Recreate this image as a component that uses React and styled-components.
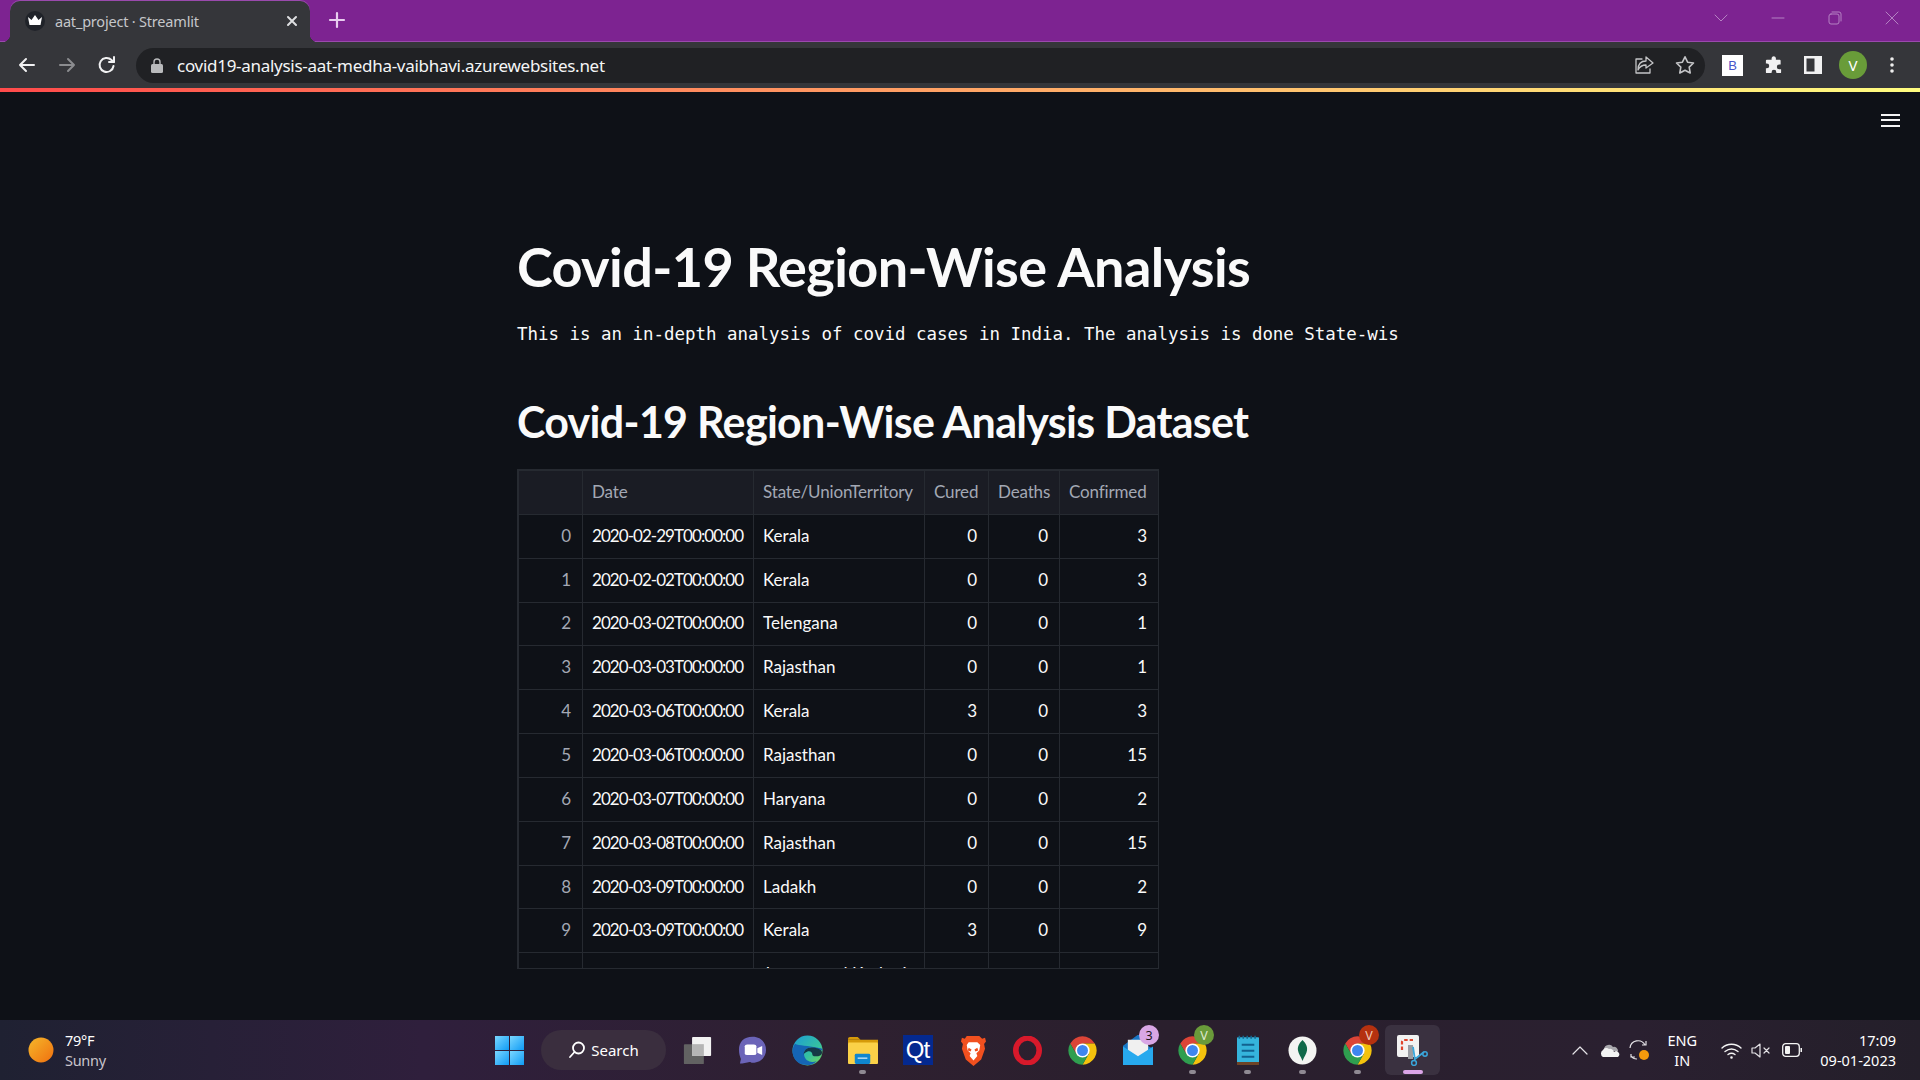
import React from "react";
import styled, { createGlobalStyle } from "styled-components";

const rows = [
  [0, "2020-02-29T00:00:00", "Kerala", 0, 0, 3],
  [1, "2020-02-02T00:00:00", "Kerala", 0, 0, 3],
  [2, "2020-03-02T00:00:00", "Telengana", 0, 0, 1],
  [3, "2020-03-03T00:00:00", "Rajasthan", 0, 0, 1],
  [4, "2020-03-06T00:00:00", "Kerala", 3, 0, 3],
  [5, "2020-03-06T00:00:00", "Rajasthan", 0, 0, 15],
  [6, "2020-03-07T00:00:00", "Haryana", 0, 0, 2],
  [7, "2020-03-08T00:00:00", "Rajasthan", 0, 0, 15],
  [8, "2020-03-09T00:00:00", "Ladakh", 0, 0, 2],
  [9, "2020-03-09T00:00:00", "Kerala", 3, 0, 9],
  ["", "", "Jammu and Kashmir", "", "", ""],
];

const GlobalStyle = createGlobalStyle`
  html, body { margin: 0; padding: 0; background: #0e1117; }
  * { box-sizing: border-box; }
`;

const Screen = styled.div`
  width: 1920px;
  height: 1080px;
  display: flex;
  flex-direction: column;
  overflow: hidden;
  font-family: "Noto Sans", sans-serif;
`;

const TabStrip = styled.div`
  height: 42px;
  flex: none;
  display: flex;
  align-items: flex-end;
  padding-left: 10px;
  background: #7d2391;
  border-bottom: 1px solid #9a4aad;
`;

const Tab = styled.div`
  position: relative;
  width: 300px;
  height: 41px;
  margin-bottom: -1px;
  display: flex;
  align-items: center;
  padding: 0 11px 2px 15px;
  background: #35363a;
  border-radius: 10px 10px 0 0;
  box-shadow: 0 -1px 0 #9a4aad;
  color: #c5c7ca;
  font-size: 14.5px;

  &::before, &::after {
    content: "";
    position: absolute;
    bottom: 0;
    width: 8px;
    height: 8px;
  }
  &::before {
    left: -8px;
    background: radial-gradient(circle at 0 0, transparent 8px, #35363a 8.5px);
  }
  &::after {
    right: -8px;
    background: radial-gradient(circle at 100% 0, transparent 8px, #35363a 8.5px);
  }
`;

const Favicon = styled.span`
  width: 20px;
  height: 20px;
  margin-right: 10px;
  flex: none;
  display: flex;
  align-items: center;
  justify-content: center;
  border-radius: 50%;
  background: #202329;
`;

const TabTitle = styled.span`
  flex: 1;
  letter-spacing: -0.2px;
`;

const NewTab = styled.span`
  display: flex;
  margin: 0 0 12px 18px;
`;

const WindowControls = styled.div`
  margin-left: auto;
  display: flex;
  align-items: center;
  align-self: flex-start;
  height: 36px;
`;

const WindowButton = styled.span`
  width: 57px;
  display: flex;
  justify-content: center;
`;

const Toolbar = styled.div`
  height: 46px;
  flex: none;
  display: flex;
  align-items: center;
  padding-left: 17px;
  background: #35363a;
  color: #fff;
`;

const NavButton = styled.span`
  width: ${(p) => p.$w || 40}px;
  display: flex;
  align-items: center;
`;

const Omnibox = styled.div`
  width: 1569px;
  height: 35px;
  margin-left: 7px;
  padding-left: 15px;
  display: flex;
  align-items: center;
  border-radius: 18px;
  background: #202124;
`;

const UrlText = styled.span`
  flex: 1;
  margin-left: 14px;
  font-size: 17px;
  letter-spacing: -0.28px;
  color: #f4f5f6;
`;

const BarIcon = styled.span`
  display: flex;
  justify-content: center;
  width: ${(p) => p.$w || 40}px;
  margin-left: ${(p) => p.$gap || 0}px;
`;

const ExtensionBox = styled.span`
  width: 21px;
  height: 21px;
  display: flex;
  align-items: center;
  justify-content: center;
  background: #fff;
  color: #4655c8;
  font: 13px "Liberation Sans", sans-serif;
`;

const Avatar = styled.span`
  width: 28px;
  height: 28px;
  display: flex;
  align-items: center;
  justify-content: center;
  border-radius: 50%;
  background: #699c39;
  color: #fff;
  font-size: 15px;
`;

const Decoration = styled.div`
  height: 4px;
  flex: none;
  background: linear-gradient(90deg, #ff4b4b, #fffd80);
`;

const Main = styled.main`
  flex: 1;
  min-height: 0;
  padding-left: 517px;
  background: #0e1117;
  color: #fafafa;
`;

const MenuRow = styled.div`
  height: 40px;
  display: flex;
  justify-content: flex-end;
  align-items: center;
  padding: 16px 20px 0 0;
  margin-bottom: 100px;
`;

const Hamburger = styled.span`
  width: 19px;
  height: 13px;
  border-top: 2px solid #f4f4f4;
  border-bottom: 2px solid #f4f4f4;
  position: relative;

  &::after {
    content: "";
    position: absolute;
    left: 0;
    right: 0;
    top: 3.5px;
    height: 2px;
    background: #f4f4f4;
  }
`;

const Title = styled.h1`
  margin: 0;
  font: 700 54px/70px Lato, sans-serif;
  letter-spacing: -0.6px;
`;

const Lead = styled.p`
  margin: 20px 0 0;
  font: 17.45px/24px "DejaVu Sans Mono", monospace;
  white-space: nowrap;
`;

const Subtitle = styled.h2`
  margin: 46px 0 0;
  font: 700 43px/60px Lato, sans-serif;
  letter-spacing: -0.7px;
`;

const TableFrame = styled.div`
  width: 642px;
  height: 500px;
  margin-top: 17px;
  overflow: hidden;
  border: 1px solid #262a31;
`;

const Table = styled.table`
  width: 640px;
  table-layout: fixed;
  border-collapse: collapse;
  font: 400 17px Lato, sans-serif;
`;

const HeadCell = styled.th`
  height: 43.85px;
  padding: 0 0 2px 9px;
  text-align: left;
  font-weight: 400;
  letter-spacing: -0.15px;
  color: #a3a8b4;
  background: #1a1c24;
  border: 1px solid #262a31;
  white-space: nowrap;
`;

const Cell = styled.td`
  height: 43.85px;
  padding: 0 ${(p) => (p.$right ? 11 : 0)}px 2px 9px;
  text-align: ${(p) => (p.$right ? "right" : "left")};
  color: ${(p) => (p.$muted ? "#a3a8b4" : "#fafafa")};
  letter-spacing: ${(p) => (p.$date ? "-0.95px" : "normal")};
  border: 1px solid #262a31;
  white-space: nowrap;
`;

const Taskbar = styled.footer`
  height: 60px;
  flex: none;
  display: flex;
  align-items: center;
  background: linear-gradient(90deg, #1f2132 0%, #2f1f3c 22%, #2e2030 45%, #2a1f2d 60%, #2a2030 85%, #241f2a 100%);
  color: #fff;
`;

const Weather = styled.div`
  width: 495px;
  padding-left: 28px;
  display: flex;
  align-items: center;
  gap: 11px;
  flex: none;
`;

const WeatherText = styled.div`
  font-size: 14.5px;
  line-height: 20px;
  letter-spacing: -0.3px;
`;

const Muted = styled.div`
  color: #c9c5cc;
`;

const StartButton = styled.span`
  width: 33px;
  display: flex;
  margin-right: 13px;
`;

const SearchPill = styled.div`
  width: 125px;
  height: 40px;
  margin-right: 4px;
  display: flex;
  align-items: center;
  justify-content: center;
  gap: 5px;
  border-radius: 20px;
  background: #3a2e3e;
  font-size: 15px;
`;

const Dock = styled.div`
  display: flex;
  align-items: center;
`;

const DockItem = styled.div`
  position: relative;
  width: 55px;
  height: 50px;
  display: flex;
  flex-direction: column;
  align-items: center;
  justify-content: center;
  border-radius: 6px;
  background: ${(p) => (p.$active ? "#3a3140" : "transparent")};
`;

const RunDot = styled.span`
  position: absolute;
  bottom: 1px;
  width: ${(p) => (p.$active ? 20 : 7)}px;
  height: 4px;
  border-radius: 2px;
  background: ${(p) => (p.$active ? "#dba5e8" : "#8f8a93")};
`;

const Badge = styled.span`
  position: absolute;
  top: 0;
  right: 6px;
  width: 20px;
  height: 20px;
  display: flex;
  align-items: center;
  justify-content: center;
  border-radius: 50%;
  font-size: 12.5px;
  background: ${(p) => p.$bg};
  color: ${(p) => p.$fg};
`;

const QtTile = styled.span`
  width: 30px;
  height: 30px;
  display: flex;
  align-items: center;
  justify-content: center;
  background: #04298f;
  color: #fff;
  font: 400 24px "Liberation Sans", sans-serif;
  letter-spacing: -1px;
`;

const Tray = styled.div`
  margin-left: auto;
  display: flex;
  align-items: center;
  padding-right: 24px;
  font-size: 14.5px;
`;

const TrayIcon = styled.span`
  width: ${(p) => p.$w || 30}px;
  display: flex;
  justify-content: center;
`;

const Lang = styled.div`
  width: 56px;
  margin: 0 6px 0 0;
  text-align: center;
  line-height: 20px;
`;

const Clock = styled.div`
  margin-left: 13px;
  text-align: right;
  line-height: 20px;
`;

const Stroke = ({ w = 20, h = 20, vb = "0 0 20 20", color = "#fff", sw = 2, children }) => (
  <svg width={w} height={h} viewBox={vb} fill="none" stroke={color} strokeWidth={sw} strokeLinecap="round" strokeLinejoin="round">
    {children}
  </svg>
);

const Chrome = () => (
  <svg width="31" height="31" viewBox="0 0 48 48">
    <path d="M43 13A22 22 0 0 0 5 13L14.5 29.5 24 13Z" fill="#db4437" />
    <path d="M43 13A22 22 0 0 1 24 46L33.5 29.5 24 13Z" fill="#f4c20d" />
    <path d="M24 46A22 22 0 0 1 5 13L14.5 29.5H33.5Z" fill="#2f9e4f" />
    <circle cx="24" cy="24" r="11" fill="#fff" />
    <circle cx="24" cy="24" r="8.5" fill="#3f86ee" />
  </svg>
);

const TaskView = () => (
  <svg width="31" height="29" viewBox="0 0 32 32">
    <rect x="1" y="9" width="22" height="22" rx="1" fill="#626262" />
    <rect x="10" y="1" width="21" height="21" rx="1" fill="#f2f2f2" />
    <rect x="10" y="9" width="13" height="13" fill="#b5b5b5" />
  </svg>
);

const Teams = () => (
  <svg width="29" height="29" viewBox="0 0 30 38" preserveAspectRatio="none">
    <path d="M15 1C6 1 1 8 1 18c0 5 1 9 2 12l-1 6c3 0 7-1 10-2 1 0 2 1 3 1 9 0 14-8 14-17S24 1 15 1Z" fill="#6b64b8" />
    <rect x="7" y="11" width="12" height="14" rx="2.5" fill="#fff" />
    <path d="M20 16l5-3v12l-5-3Z" fill="#fff" />
  </svg>
);

const Edge = () => (
  <svg width="31" height="31" viewBox="0 0 32 32">
    <defs>
      <linearGradient id="edgeTop" x1="0" y1="0" x2="1" y2="1">
        <stop offset="0" stopColor="#1c9bd6" />
        <stop offset="0.6" stopColor="#35c1a1" />
        <stop offset="1" stopColor="#7bd651" />
      </linearGradient>
    </defs>
    <circle cx="16" cy="16" r="15.5" fill="url(#edgeTop)" />
    <path d="M3 9C1 12 .5 15 .5 18c1 8 7 13 15 13 4 0 7-1 10-4-6 2-12 0-13-6-1-4 2-8 7-8 4 0 7 2 12 3 0-3-3-2-6-3C17 11 7 11 3 9Z" fill="#1565b5" />
    <path d="M12 21c0-5 3-8 8-8 5 0 11 2 11 5 0 3-3 4-7 4-2 0-3-1-3-2 0-2-2-4-5-3-2 1-4 2-4 4Z" fill="#0e1e38" opacity="0.85" />
  </svg>
);

const Folder = () => (
  <svg width="30" height="28" viewBox="0 0 31 30" preserveAspectRatio="none">
    <path d="M0 3a2 2 0 0 1 2-2h8l3 3h-13Z" fill="#d69a09" />
    <rect y="4" width="31" height="4" fill="#d69a09" />
    <rect y="7" width="31" height="23" rx="1" fill="#fbd148" />
    <rect x="7" y="19" width="16" height="11" rx="1.5" fill="#0f86cf" />
    <rect x="10" y="23" width="10" height="1.5" fill="#bfe2f6" />
  </svg>
);

const Brave = () => (
  <svg width="26" height="31" viewBox="0 0 27 34" preserveAspectRatio="none">
    <path d="M7 1h13l3 3 3-1 1 4-2 3 1 5-4 12-8 7-8-7L2 15l1-5-2-3 1-4 3 1Z" fill="#f1501f" />
    <path d="M9 8h9l3 3-1 6-3 3 1 3-4 5-4-5 1-3-3-3-1-6Z" fill="#fff" />
    <path d="M9 14l3 2-1 2-3-1ZM18 14l-3 2 1 2 3-1Z" fill="#f1501f" />
  </svg>
);

const Opera = () => (
  <svg width="29" height="29" viewBox="0 0 31 33" preserveAspectRatio="none">
    <ellipse cx="15.5" cy="16.5" rx="12.5" ry="14" fill="none" stroke="#d8192b" strokeWidth="6" />
  </svg>
);

const Mail = () => (
  <svg width="30" height="30" viewBox="0 0 31 31">
    <path d="M0 11 15 0h4v8L31 14v17H0Z" fill="#1976c5" />
    <path d="M5 5h21v14L15 25 5 19Z" fill="#f0f0f0" />
    <path d="M0 12 15.5 22 31 12v19H0Z" fill="#27a9ee" />
  </svg>
);

const Notepad = () => (
  <svg width="22" height="30" viewBox="0 0 28 40" preserveAspectRatio="none">
    <rect y="3" width="28" height="36" rx="1" fill="#35b4dc" />
    <rect y="36" width="28" height="4" fill="#6e4326" />
    <path d="M3 1v4M8 1v4M13 1v4M18 1v4M23 1v4" stroke="#15678e" strokeWidth="2" />
    <path d="M6 13h16M6 21h16M6 29h16" stroke="#12618f" strokeWidth="2.5" />
  </svg>
);

const Mongo = () => (
  <svg width="29" height="29" viewBox="0 0 29 29">
    <circle cx="14.5" cy="14.5" r="14" fill="#f3f4f2" />
    <path d="M14.5 4c-4 4-5 7-4.500 10.500.5 3.500 3 6 4.500 10.500 1.500-4.500 4-7 4.500-10.500C19.500 11 18.500 8 14.500 4Z" fill="#106949" />
  </svg>
);

const Snip = () => (
  <svg width="31" height="31" viewBox="0 0 31 31">
    <rect width="22" height="22" rx="2" fill="#f2f2f2" />
    <path d="M5 15V7a2 2 0 0 1 2-2h9" fill="none" stroke="#e0452d" strokeWidth="2.2" strokeDasharray="3.500 2" />
    <path d="M11 10h5v14h-5Z" fill="#9b9da3" />
    <path d="M16 12 18 25M27 17 18 24" stroke="#3aa7dc" strokeWidth="1.800" fill="none" />
    <circle cx="28" cy="19" r="2.200" fill="none" stroke="#3aa7dc" strokeWidth="1.500" />
    <circle cx="17" cy="28" r="2.400" fill="none" stroke="#3aa7dc" strokeWidth="1.500" />
  </svg>
);

const dock = [
  { key: "view", icon: <TaskView /> },
  { key: "teams", icon: <Teams /> },
  { key: "edge", icon: <Edge /> },
  { key: "files", icon: <Folder />, running: true },
  { key: "qt", icon: <QtTile>Qt</QtTile> },
  { key: "brave", icon: <Brave /> },
  { key: "opera", icon: <Opera /> },
  { key: "chrome", icon: <Chrome /> },
  { key: "mail", icon: <Mail />, badge: "3", bg: "#d9a6e5", fg: "#1d1820" },
  { key: "chrome-v", icon: <Chrome />, running: true, badge: "V", bg: "#6a9a3a", fg: "#dfe9cf" },
  { key: "notepad", icon: <Notepad />, running: true },
  { key: "mongo", icon: <Mongo />, running: true },
  { key: "chrome-r", icon: <Chrome />, running: true, badge: "V", bg: "#b5310f", fg: "#f0c8b8" },
  { key: "snip", icon: <Snip />, active: true },
];

export default function App() {
  return (
    <Screen>
      <GlobalStyle />
      <TabStrip>
        <Tab>
          <Favicon>
            <svg width="14" height="12" viewBox="0 0 14 12">
              <path d="M0 2l3.5 3L7 0l3.500 5L14 2l-1.500 8h-11Z" fill="#fff" />
            </svg>
          </Favicon>
          <TabTitle>aat_project · Streamlit</TabTitle>
          <Stroke w={14} h={14} vb="0 0 14 14" color="#dfe0e2" sw={2}>
            <path d="M3 3l8 8M11 3l-8 8" />
          </Stroke>
        </Tab>
        <NewTab>
          <Stroke w={18} h={18} vb="0 0 18 18" color="#e8cdef" sw={2.2}>
            <path d="M9 2v14M2 9h14" />
          </Stroke>
        </NewTab>
        <WindowControls>
          <WindowButton>
            <Stroke w={14} h={9} vb="0 0 14 9" color="#b582c3" sw={1}>
              <path d="M1 1l6 6 6-6" />
            </Stroke>
          </WindowButton>
          <WindowButton>
            <Stroke w={14} h={2} vb="0 0 14 2" color="#b582c3" sw={1}>
              <path d="M1 1h12" />
            </Stroke>
          </WindowButton>
          <WindowButton>
            <Stroke w={14} h={14} vb="0 0 14 14" color="#b582c3" sw={1}>
              <rect x="1" y="3" width="10" height="10" rx="2" />
              <path d="M4 1h7a2 2 0 0 1 2 2v7" />
            </Stroke>
          </WindowButton>
          <WindowButton>
            <Stroke w={14} h={14} vb="0 0 14 14" color="#b582c3" sw={1}>
              <path d="M1 1l12 12M13 1L1 13" />
            </Stroke>
          </WindowButton>
        </WindowControls>
      </TabStrip>

      <Toolbar>
        <NavButton>
          <Stroke vb="0 0 20 20" color="#f1f1f2">
            <path d="M17 10H3M9 4l-6 6 6 6" />
          </Stroke>
        </NavButton>
        <NavButton>
          <Stroke vb="0 0 20 20" color="#8b8c8f">
            <path d="M3 10h14M11 4l6 6-6 6" />
          </Stroke>
        </NavButton>
        <NavButton $w={32}>
          <Stroke vb="0 0 20 20" color="#f1f1f2">
            <path d="M16.500 11a7 7 0 1 1-2-6L17 7" />
            <path d="M17 2v5h-5" />
          </Stroke>
        </NavButton>
        <Omnibox>
          <svg width="12" height="15" viewBox="0 0 12 15">
            <path d="M3 6V4a3 3 0 0 1 6 0v2" fill="none" stroke="#b9babc" strokeWidth="1.4" />
            <rect y="6" width="12" height="9" rx="1.500" fill="#b9babc" />
          </svg>
          <UrlText>covid19-analysis-aat-medha-vaibhavi.azurewebsites.net</UrlText>
          <BarIcon $w={41}>
            <Stroke vb="0 0 20 20" color="#c4c5c7" sw={1.3}>
              <path d="M8 4H2v14h14v-4" />
              <path d="M12 2l7 6-7 5V10c-4 0-6 1-8 5 0-6 3-9 8-9Z" />
            </Stroke>
          </BarIcon>
          <BarIcon $w={41}>
            <Stroke vb="0 0 20 20" color="#c4c5c7" sw={1.6}>
              <path d="M10 1.800l2.600 5.400 5.900.8-4.300 4.100 1 5.900-5.200-2.800-5.200 2.800 1-5.900L1.500 8l5.900-.8Z" />
            </Stroke>
          </BarIcon>
        </Omnibox>
        <BarIcon $w={41} $gap={7}>
          <ExtensionBox>B</ExtensionBox>
        </BarIcon>
        <BarIcon $w={41}>
          <svg width="19" height="19" viewBox="0 0 20 20">
            <path d="M8 2a2.300 2.300 0 0 1 4.500 0v2h4a1 1 0 0 1 1 1v4h-1.500a2.500 2.500 0 0 0 0 5H18v3a1 1 0 0 1-1 1h-4v-1a2.500 2.500 0 0 0-5 0v1H3a1 1 0 0 1-1-1v-4h1a2.500 2.500 0 0 0 0-5H2V5a1 1 0 0 1 1-1h5Z" fill="#f1f1f2" />
          </svg>
        </BarIcon>
        <BarIcon $w={38}>
          <svg width="18" height="18" viewBox="0 0 18 18">
            <rect width="18" height="18" fill="#f1f1f2" />
            <rect x="2.500" y="2.500" width="8" height="13" fill="#35363a" />
          </svg>
        </BarIcon>
        <BarIcon $w={42}>
          <Avatar>V</Avatar>
        </BarIcon>
        <BarIcon $w={36}>
          <svg width="4" height="16" viewBox="0 0 4 16">
            <circle cx="2" cy="2" r="1.800" fill="#eee" />
            <circle cx="2" cy="8" r="1.800" fill="#eee" />
            <circle cx="2" cy="14" r="1.800" fill="#eee" />
          </svg>
        </BarIcon>
      </Toolbar>
      <Decoration />

      <Main>
        <MenuRow>
          <Hamburger />
        </MenuRow>
        <Title>Covid-19 Region-Wise Analysis</Title>
        <Lead>This is an in-depth analysis of covid cases in India. The analysis is done State-wis</Lead>
        <Subtitle>Covid-19 Region-Wise Analysis Dataset</Subtitle>
        <TableFrame>
          <Table>
            <colgroup>
              <col width="64" />
              <col width="171" />
              <col width="171" />
              <col width="64" />
              <col width="71" />
              <col width="99" />
            </colgroup>
            <thead>
              <tr>
                <HeadCell />
                <HeadCell>Date</HeadCell>
                <HeadCell>State/UnionTerritory</HeadCell>
                <HeadCell>Cured</HeadCell>
                <HeadCell>Deaths</HeadCell>
                <HeadCell>Confirmed</HeadCell>
              </tr>
            </thead>
            <tbody>
              {rows.map((row, i) => (
                <tr key={i}>
                  <Cell $right $muted>{row[0]}</Cell>
                  <Cell $date>{row[1]}</Cell>
                  <Cell>{row[2]}</Cell>
                  <Cell $right>{row[3]}</Cell>
                  <Cell $right>{row[4]}</Cell>
                  <Cell $right>{row[5]}</Cell>
                </tr>
              ))}
            </tbody>
          </Table>
        </TableFrame>
      </Main>

      <Taskbar>
        <Weather>
          <svg width="26" height="26" viewBox="0 0 26 26">
            <defs>
              <linearGradient id="sun" x1="0" y1="0" x2="1" y2="1">
                <stop offset="0" stopColor="#f5b72a" />
                <stop offset="1" stopColor="#f0700f" />
              </linearGradient>
            </defs>
            <circle cx="13" cy="13" r="12.500" fill="url(#sun)" />
          </svg>
          <WeatherText>
            <div>79°F</div>
            <Muted>Sunny</Muted>
          </WeatherText>
        </Weather>
        <StartButton>
          <svg width="29" height="29" viewBox="0 0 29 29">
            <defs>
              <linearGradient id="win" x1="0" y1="0" x2="1" y2="1">
                <stop offset="0" stopColor="#7ad7ff" />
                <stop offset="1" stopColor="#0f9bf5" />
              </linearGradient>
            </defs>
            <rect width="14" height="14" fill="url(#win)" />
            <rect x="15" width="14" height="14" fill="url(#win)" />
            <rect y="15" width="14" height="14" fill="url(#win)" />
            <rect x="15" y="15" width="14" height="14" fill="url(#win)" />
          </svg>
        </StartButton>
        <SearchPill>
          <Stroke w={18} h={18} vb="0 0 18 18" sw={1.8}>
            <circle cx="10.500" cy="7" r="5.500" />
            <path d="M6.500 11 2 16" />
          </Stroke>
          Search
        </SearchPill>
        <Dock>
          {dock.map((item) => (
            <DockItem key={item.key} $active={item.active}>
              {item.icon}
              {item.badge && <Badge $bg={item.bg} $fg={item.fg}>{item.badge}</Badge>}
              {(item.running || item.active) && <RunDot $active={item.active} />}
            </DockItem>
          ))}
        </Dock>
        <Tray>
          <TrayIcon $w={28}>
            <Stroke w={16} h={10} vb="0 0 16 10" color="#e4e2e6" sw={1.2}>
              <path d="M1 9l7-7 7 7" />
            </Stroke>
          </TrayIcon>
          <TrayIcon>
            <svg width="21" height="14" viewBox="0 0 21 14">
              <path d="M5 6a5 5 0 0 1 9-2 4 4 0 0 1 5 4H6Z" fill="#a9a8ad" />
              <path d="M4 14a4 4 0 0 1 0-7 4 4 0 0 1 6-1 4 4 0 0 1 5 3 2.500 2.500 0 0 1 4 5Z" fill="#f4f4f4" />
            </svg>
          </TrayIcon>
          <TrayIcon>
            <svg width="22" height="22" viewBox="0 0 22 22">
              <path d="M2 9a8 8 0 0 1 15-3M18 2v4h-4M7 18H3v-3M3 17a7 7 0 0 0 6 3" fill="none" stroke="#e4e2e6" strokeWidth="1.200" />
              <circle cx="16" cy="16" r="5" fill="#f59a0c" />
            </svg>
          </TrayIcon>
          <Lang>ENG<br />IN</Lang>
          <TrayIcon $w={30}>
            <Stroke w={21} h={17} vb="0 0 21 17" color="#f4f4f4" sw={1.4}>
              <path d="M1 6c5-5 14-5 19 0M4 9.500c4-3 9-3 13 0M7 12.500c2-1.500 5-1.500 7 0" />
              <circle cx="10.500" cy="15.500" r=".6" />
            </Stroke>
          </TrayIcon>
          <TrayIcon $w={30}>
            <Stroke w={20} h={15} vb="0 0 20 15" color="#e4e2e6" sw={1.2}>
              <path d="M1 5v5h3l5 4V1L4 5ZM13 5l5 5M18 5l-5 5" />
            </Stroke>
          </TrayIcon>
          <TrayIcon $w={31}>
            <svg width="20" height="14" viewBox="0 0 20 14">
              <rect x=".7" y=".7" width="16.600" height="12.600" rx="3" fill="none" stroke="#f4f4f4" strokeWidth="1.300" />
              <rect x="3" y="3" width="5" height="8" rx="1" fill="#f4f4f4" />
              <rect x="18.500" y="5" width="1.500" height="4" fill="#f4f4f4" />
            </svg>
          </TrayIcon>
          <Clock>
            17:09
            <br />
            09-01-2023
          </Clock>
        </Tray>
      </Taskbar>
    </Screen>
  );
}
